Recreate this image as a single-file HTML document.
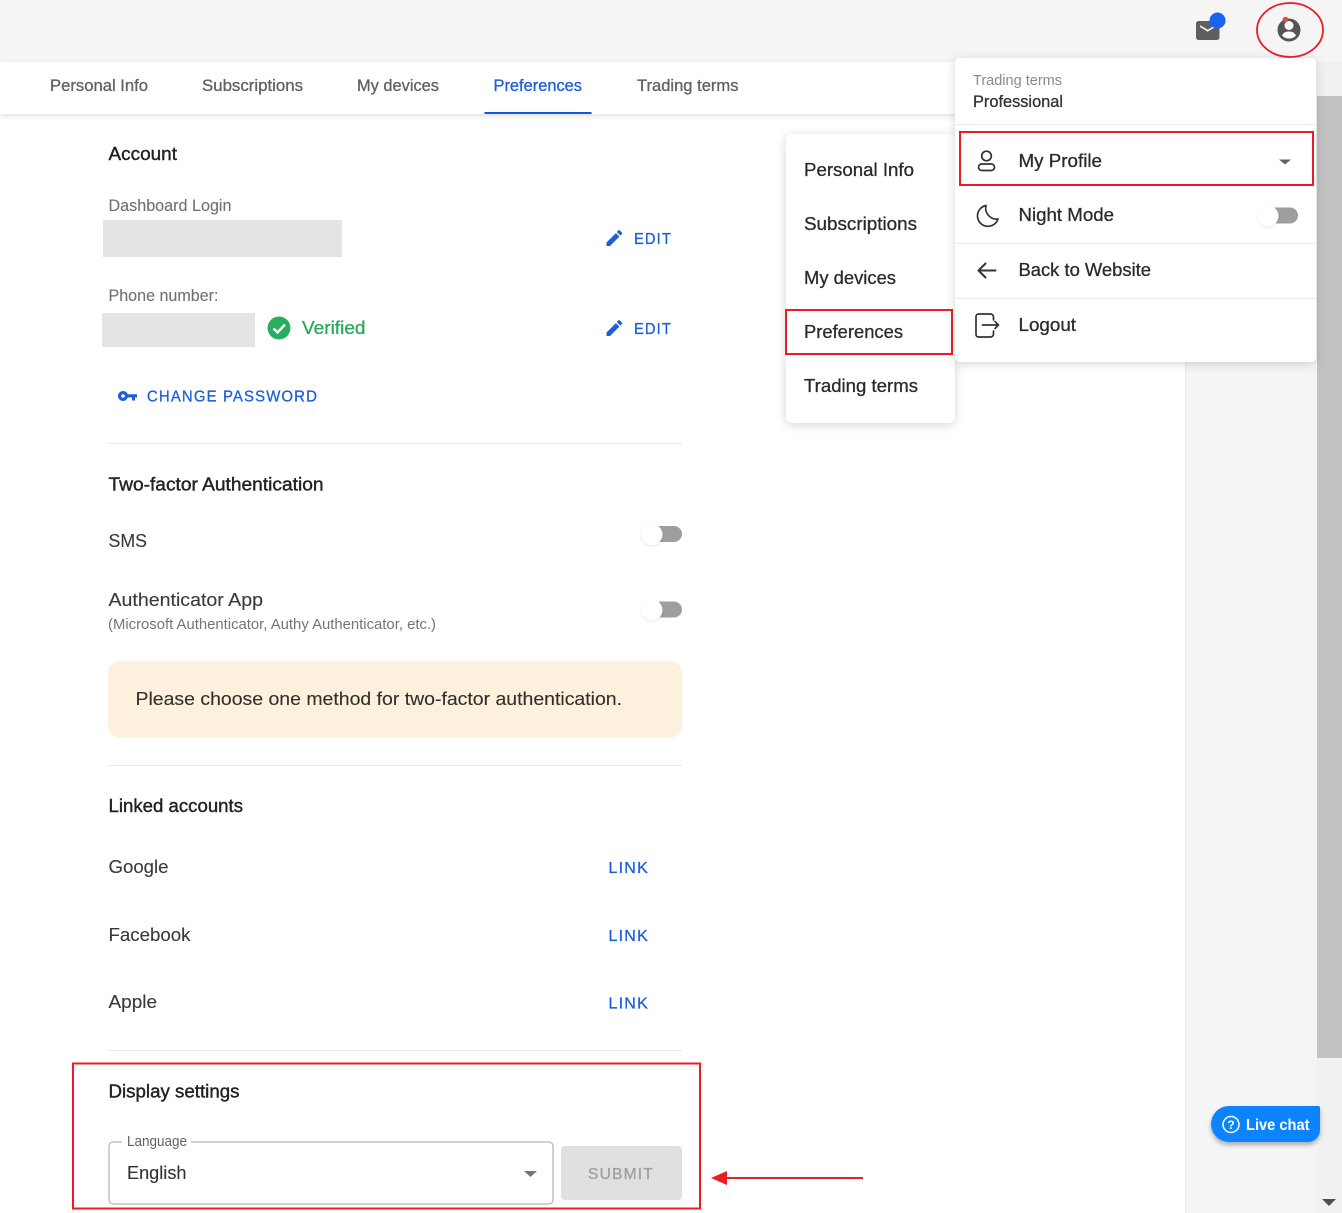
<!DOCTYPE html>
<html lang="en"><head><meta charset="utf-8"><title>Preferences</title>
<style>
html,body{margin:0;padding:0;background:#fff;width:1342px;height:1213px;overflow:hidden}
svg{display:block;position:absolute;left:0;top:0}
text{font-family:"Liberation Sans",sans-serif;white-space:pre}
.m{stroke:currentColor;stroke-width:.4px}
.b{stroke:currentColor;stroke-width:.3px}
.r{stroke:currentColor;stroke-width:.12px}
.u{letter-spacing:1.2px}
</style></head><body>
<svg width="1342" height="1213" viewBox="0 0 1342 1213" xmlns="http://www.w3.org/2000/svg">
<defs>
<filter id="s1" x="-10%" y="-10%" width="120%" height="125%"><feDropShadow dx="0" dy="2" stdDeviation="5" flood-color="#000" flood-opacity=".16"/></filter>
<filter id="s2" x="-10%" y="-100%" width="120%" height="300%"><feDropShadow dx="0" dy="2" stdDeviation="3" flood-color="#000" flood-opacity=".12"/></filter>
<filter id="s3" x="-50%" y="-50%" width="200%" height="200%"><feDropShadow dx="0" dy="1" stdDeviation="1.200" flood-color="#000" flood-opacity=".1"/></filter>
<filter id="s4" x="-20%" y="-30%" width="140%" height="170%"><feDropShadow dx="0" dy="3" stdDeviation="2.500" flood-color="#000" flood-opacity=".3"/></filter>
</defs>

<!-- backgrounds -->
<rect width="1342" height="1213" fill="#fff"/>
<rect width="1342" height="62" fill="#f5f5f5"/>
<rect x="1185" y="62" width="132" height="1151" fill="#f5f5f5"/>
<rect x="1185" y="62" width="1" height="1151" fill="#ececec"/>
<rect x="1317" y="62" width="25" height="1151" fill="#f1f1f1"/>
<rect x="1317" y="96" width="25" height="962" fill="#c1c1c1"/>
<path d="M1322 1199h14l-7 7z" fill="#505050"/>

<!-- tabs -->
<rect x="0" y="62" width="1185" height="52" fill="#fff" filter="url(#s2)"/>
<g font-size="16.500" fill="#616161" color="#616161">
<text class="b" x="50" y="91" textLength="98" lengthAdjust="spacingAndGlyphs">Personal Info</text>
<text class="b" x="202" y="91" textLength="101" lengthAdjust="spacingAndGlyphs">Subscriptions</text>
<text class="b" x="357" y="91" textLength="82" lengthAdjust="spacingAndGlyphs">My devices</text>
<text class="b" x="493.500" y="91" textLength="88.500" lengthAdjust="spacingAndGlyphs" fill="#1d5fd8" color="#1d5fd8">Preferences</text>
<text class="b" x="637" y="91" textLength="101.500" lengthAdjust="spacingAndGlyphs">Trading terms</text>
</g>
<rect x="484.500" y="112" width="107" height="2" fill="#1259e0"/>

<!-- account -->
<g fill="#222" color="#222" font-size="18.500">
<text class="m" x="108.500" y="160" textLength="68.500" lengthAdjust="spacingAndGlyphs">Account</text>
<text class="m" x="108.500" y="490.500" textLength="215" lengthAdjust="spacingAndGlyphs">Two-factor Authentication</text>
<text class="m" x="108.500" y="812" textLength="134.500" lengthAdjust="spacingAndGlyphs">Linked accounts</text>
<text class="m" x="108.500" y="1097.500" textLength="131" lengthAdjust="spacingAndGlyphs">Display settings</text>
</g>
<g font-size="16.500" fill="#707070" color="#707070">
<text class="r" x="108.500" y="211" textLength="123" lengthAdjust="spacingAndGlyphs">Dashboard Login</text>
<text class="r" x="108.500" y="301" textLength="110" lengthAdjust="spacingAndGlyphs">Phone number:</text>
</g>
<rect x="103" y="220" width="239" height="37" fill="#e4e4e4"/>
<rect x="102" y="313" width="153" height="34" fill="#e4e4e4"/>
<circle cx="279" cy="328" r="11.500" fill="#27ae60"/>
<path d="M273.500 328.500l4 4 7.500-8" fill="none" stroke="#fff" stroke-width="2.400"/>
<text class="b" x="302" y="334" font-size="18.500" fill="#27a85f" color="#27a85f" textLength="63.500" lengthAdjust="spacingAndGlyphs">Verified</text>

<g fill="#1d5fd8" color="#1d5fd8" font-size="16">
<path d="M606.500 242.500v3.500h3.500l9.400-9.400-3.500-3.500zM622 234a1 1 0 0 0 0-1.400l-2.200-2.200a1 1 0 0 0-1.400 0l-1.600 1.600 3.500 3.500z"/>
<path d="M606.500 332.500v3.500h3.500l9.400-9.400-3.500-3.500zM622 324a1 1 0 0 0 0-1.400l-2.200-2.200a1 1 0 0 0-1.400 0l-1.600 1.600 3.500 3.500z"/>
<text class="b u" x="634" y="244" textLength="38" lengthAdjust="spacingAndGlyphs">EDIT</text>
<text class="b u" x="634" y="334" textLength="38" lengthAdjust="spacingAndGlyphs">EDIT</text>
<path fill-rule="evenodd" d="M123 391a5 5 0 0 1 4.700 3.200h9.300v3.300h-2v3h-3v-3h-4.300a5 5 0 1 1-4.700-6.500zm0 3.200a1.800 1.800 0 1 0 0 3.600 1.800 1.800 0 0 0 0-3.600z"/>
<text class="b u" x="147" y="401.500" textLength="171" lengthAdjust="spacingAndGlyphs">CHANGE PASSWORD</text>
<text class="b u" x="608.500" y="873" textLength="40.500" lengthAdjust="spacingAndGlyphs">LINK</text>
<text class="b u" x="608.500" y="941" textLength="40.500" lengthAdjust="spacingAndGlyphs">LINK</text>
<text class="b u" x="608.500" y="1008.500" textLength="40.500" lengthAdjust="spacingAndGlyphs">LINK</text>
</g>

<g fill="#e9e9e9">
<rect x="108" y="443" width="574" height="1"/>
<rect x="108" y="765" width="574" height="1"/>
<rect x="108" y="1050" width="574" height="1"/>
</g>

<g font-size="18.500" fill="#3a3a3a" color="#3a3a3a">
<text class="r" x="108.500" y="547" textLength="38.500" lengthAdjust="spacingAndGlyphs">SMS</text>
<text class="r" x="108.500" y="606" textLength="154.500" lengthAdjust="spacingAndGlyphs">Authenticator App</text>
<text class="r" x="108.500" y="873" textLength="60" lengthAdjust="spacingAndGlyphs">Google</text>
<text class="r" x="108.500" y="941" textLength="82" lengthAdjust="spacingAndGlyphs">Facebook</text>
<text class="r" x="108.500" y="1008" textLength="48.500" lengthAdjust="spacingAndGlyphs">Apple</text>
</g>
<text x="108" y="629" font-size="14.500" fill="#757575" textLength="328" lengthAdjust="spacingAndGlyphs">(Microsoft Authenticator, Authy Authenticator, etc.)</text>

<!-- toggles -->
<rect x="652" y="526" width="30" height="16" rx="8" fill="#9e9e9e"/>
<circle cx="652" cy="534.500" r="10.500" fill="#fff" filter="url(#s3)"/>
<rect x="652" y="601.500" width="30" height="16" rx="8" fill="#9e9e9e"/>
<circle cx="652" cy="610" r="10.500" fill="#fff" filter="url(#s3)"/>

<rect x="108" y="661" width="574" height="76.500" rx="12" fill="#fdf0dd"/>
<text class="r" x="135.500" y="705" font-size="18.500" fill="#33302a" color="#33302a" textLength="486.500" lengthAdjust="spacingAndGlyphs">Please choose one method for two-factor authentication.</text>

<!-- language -->
<path d="M122 1142h-9a4 4 0 0 0-4 4v54a4 4 0 0 0 4 4h436a4 4 0 0 0 4-4v-54a4 4 0 0 0-4-4H191" fill="none" stroke="#a3a3a3" stroke-width="1"/>
<text x="127" y="1146" font-size="14.500" fill="#616161" textLength="60" lengthAdjust="spacingAndGlyphs">Language</text>
<text class="r" x="127" y="1179" font-size="18.500" fill="#333" color="#333" textLength="59.500" lengthAdjust="spacingAndGlyphs">English</text>
<path d="M524 1171h13l-6.500 6z" fill="#757575"/>
<rect x="561" y="1146" width="121" height="54" rx="4" fill="#e0e0e0"/>
<text class="b u" x="588" y="1179" font-size="16" fill="#9e9e9e" color="#9e9e9e" textLength="66" lengthAdjust="spacingAndGlyphs">SUBMIT</text>

<!-- annotations bottom -->
<rect x="73" y="1063.500" width="627" height="145" fill="none" stroke="#ed1c24" stroke-width="2"/>
<rect x="725" y="1177" width="138" height="2" fill="#e3242b"/>
<path d="M711 1178l16-7v14z" fill="#ed1c24"/>

<!-- side submenu -->
<rect x="786" y="134" width="169" height="289" rx="6" fill="#fff" filter="url(#s1)"/>
<g font-size="18.500" fill="#2b2b2b" color="#2b2b2b">
<text class="b" x="804" y="176" textLength="110" lengthAdjust="spacingAndGlyphs">Personal Info</text>
<text class="b" x="804" y="230" textLength="113" lengthAdjust="spacingAndGlyphs">Subscriptions</text>
<text class="b" x="804" y="284" textLength="92" lengthAdjust="spacingAndGlyphs">My devices</text>
<text class="b" x="804" y="338" textLength="99" lengthAdjust="spacingAndGlyphs">Preferences</text>
<text class="b" x="804" y="392" textLength="114" lengthAdjust="spacingAndGlyphs">Trading terms</text>
</g>
<rect x="786" y="310" width="166" height="44" fill="none" stroke="#ed1c24" stroke-width="2"/>

<!-- profile panel -->
<rect x="955" y="58" width="361" height="304" rx="5" fill="#fff" filter="url(#s1)"/>
<text x="973" y="85" font-size="14.500" fill="#8a8a8a" textLength="89" lengthAdjust="spacingAndGlyphs">Trading terms</text>
<text class="b" x="973" y="107" font-size="16.500" fill="#333" color="#333" textLength="90" lengthAdjust="spacingAndGlyphs">Professional</text>
<g fill="#ececec">
<rect x="955" y="124" width="361" height="1"/>
<rect x="955" y="243" width="361" height="1"/>
<rect x="955" y="298" width="361" height="1"/>
</g>
<g font-size="18.500" fill="#2b2b2b" color="#2b2b2b">
<text class="b" x="1018.500" y="167" textLength="83.500" lengthAdjust="spacingAndGlyphs">My Profile</text>
<text class="b" x="1018.500" y="221" textLength="95.500" lengthAdjust="spacingAndGlyphs">Night Mode</text>
<text class="b" x="1018.500" y="276" textLength="132.500" lengthAdjust="spacingAndGlyphs">Back to Website</text>
<text class="b" x="1018.500" y="331" textLength="57.500" lengthAdjust="spacingAndGlyphs">Logout</text>
</g>
<g fill="none" stroke="#333" stroke-width="1.700" stroke-linecap="round" stroke-linejoin="round">
<circle cx="986.500" cy="156" r="4.800"/>
<rect x="978.500" y="164" width="16" height="6.500" rx="3.250"/>
<path d="M986 205.500a10.500 10.500 0 1 0 12 13.500 11 11 0 0 1-12-13.500z"/>
<path d="M995.500 270.500h-17M985.500 263.500l-7 7 7 7" stroke-width="2"/>
<path d="M993.500 320v-3a3 3 0 0 0-3-3h-12a2.500 2.500 0 0 0-2.500 2.500v18a2.500 2.500 0 0 0 2.500 2.500h12a3 3 0 0 0 3-3v-3M982.500 325h16M995 321.500l3.500 3.500-3.500 3.500"/>
</g>
<path d="M1279 159.500h12l-6 5z" fill="#616161"/>
<rect x="1268" y="207.500" width="30" height="16" rx="8" fill="#9e9e9e"/>
<circle cx="1268" cy="216" r="10.500" fill="#fff" filter="url(#s3)"/>
<rect x="960" y="132" width="353" height="53" fill="none" stroke="#ed1c24" stroke-width="2"/>

<!-- top icons -->
<rect x="1196" y="21" width="23.500" height="19" rx="2.500" fill="#5f5f5f"/>
<path d="M1200 26l7.700 4.700 7.700-4.700" fill="none" stroke="#fff" stroke-width="1.500"/>
<circle cx="1217.500" cy="20.500" r="8" fill="#1763f2"/>
<circle cx="1289" cy="30" r="11.500" fill="#555"/>
<circle cx="1289" cy="25.500" r="4.500" fill="#fff"/>
<path d="M1282 35.500c1.500-3 4-4 7-4s5.500 1 7 4c-1.800 2-4 3-7 3s-5.200-1-7-3z" fill="#fff"/>
<circle cx="1285.500" cy="19.500" r="2.800" fill="#e8453c"/>
<ellipse cx="1290" cy="30" rx="33" ry="27" fill="none" stroke="#ed1c24" stroke-width="1.800"/>

<!-- live chat -->
<path d="M1229 1106h89a2 2 0 0 1 2 2v22a12 12 0 0 1-12 12h-79a18 18 0 0 1 0-36z" fill="#0a84ff" filter="url(#s4)"/>
<circle cx="1231" cy="1124.500" r="8" fill="none" stroke="#fff" stroke-width="1.500"/>
<text x="1231" y="1129" font-size="12" font-weight="700" fill="#fff" text-anchor="middle">?</text>
<text x="1246" y="1130" font-size="15.500" font-weight="700" fill="#fff" textLength="63.500" lengthAdjust="spacingAndGlyphs">Live chat</text>
</svg>
</body></html>
